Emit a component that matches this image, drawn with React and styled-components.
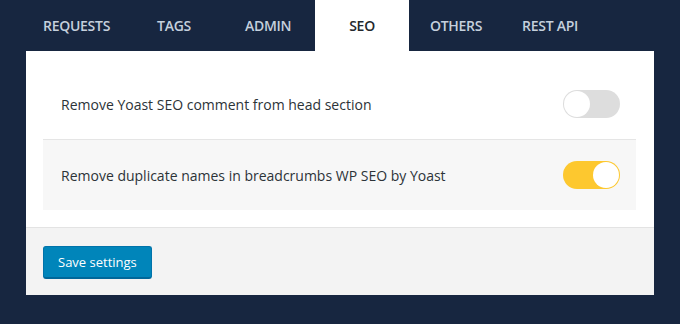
import React, { useState } from 'react';
import styled, { createGlobalStyle } from 'styled-components';

const GlobalStyle = createGlobalStyle`
    html, body{
        margin: 0;
        padding: 0;
        background: #172640;
    }
    body{
        font-family: 'Open Sans', 'Noto Sans', sans-serif;
        -webkit-font-smoothing: antialiased;
    }
`;

const tabs = ['Requests', 'Tags', 'Admin', 'SEO', 'Others', 'REST API'];

const settings = [
    { id: 'yoast-comment', label: 'Remove Yoast SEO comment from head section', on: false },
    { id: 'yoast-breadcrumbs', label: 'Remove duplicate names in breadcrumbs WP SEO by Yoast', on: true },
];

function App() {
    const [values, setValues] = useState(
        Object.fromEntries(settings.map((s) => [s.id, s.on]))
    );

    return (
        <>
            <GlobalStyle />
            <Page>
                <TabBar>
                    {tabs.map((tab) => (
                        <Tab key={tab} $active={tab === 'SEO'}>{tab}</Tab>
                    ))}
                </TabBar>
                <Panel>
                    <Rows>
                        {settings.map((s, i) => (
                            <Row key={s.id} $shaded={i % 2 === 1}>
                                <Label>{s.label}</Label>
                                <Toggle
                                    type="button"
                                    $on={values[s.id]}
                                    aria-pressed={values[s.id]}
                                    onClick={() => setValues((v) => ({ ...v, [s.id]: !v[s.id] }))}
                                >
                                    <Knob $on={values[s.id]} />
                                </Toggle>
                            </Row>
                        ))}
                    </Rows>
                    <Footer>
                        <SaveButton type="button">Save settings</SaveButton>
                    </Footer>
                </Panel>
            </Page>
        </>
    );
}

const Page = styled.div`
    width: 680px;
    height: 324px;
    padding: 0 26px;
    box-sizing: border-box;
`;

const TabBar = styled.nav`
    display: flex;
    height: 51px;
`;

const Tab = styled.div`
    min-width: 94px;
    padding: 0 17px 1px;
    box-sizing: border-box;
    display: flex;
    align-items: center;
    justify-content: center;
    font-size: 14px;
    font-weight: 600;
    text-transform: uppercase;
    letter-spacing: -0.02em;
    color: ${(p) => (p.$active ? '#23282d' : '#c5d0dd')};
    background: ${(p) => (p.$active ? '#ffffff' : 'transparent')};
`;

const Panel = styled.section`
    background: #ffffff;
`;

const Rows = styled.div`
    padding: 18px 18px 17px 17px;
`;

const Row = styled.div`
    display: flex;
    align-items: center;
    justify-content: space-between;
    height: 70px;
    padding: 0 16px 0 18px;
    background: ${(p) => (p.$shaded ? '#f7f7f7' : '#ffffff')};
    border-top: ${(p) => (p.$shaded ? '1px solid #e5e5e5' : 'none')};
`;

const Label = styled.span`
    font-size: 14px;
    color: #2c3338;
`;

const Toggle = styled.button`
    width: 57px;
    height: 28px;
    padding: 0;
    border: none;
    border-radius: 14px;
    background: ${(p) => (p.$on ? '#fdc82f' : '#dddddd')};
    display: flex;
    align-items: center;
    justify-content: ${(p) => (p.$on ? 'flex-end' : 'flex-start')};
    cursor: pointer;
`;

const Knob = styled.span`
    width: 26px;
    height: 26px;
    margin: 0 1px;
    border-radius: 50%;
    background: #ffffff;
`;

const Footer = styled.div`
    display: flex;
    align-items: flex-start;
    height: 68px;
    box-sizing: border-box;
    padding: 18px 17px;
    background: #f3f3f3;
    border-top: 1px solid #e3e3e3;
`;

const SaveButton = styled.button`
    height: 33px;
    padding: 0 14px;
    border: 1px solid #0073aa;
    border-bottom: 2px solid #006799;
    border-radius: 3px;
    background: #0085ba;
    color: #ffffff;
    font-family: 'Open Sans', 'Noto Sans', sans-serif;
    font-size: 13px;
    cursor: pointer;
`;

export default App;
